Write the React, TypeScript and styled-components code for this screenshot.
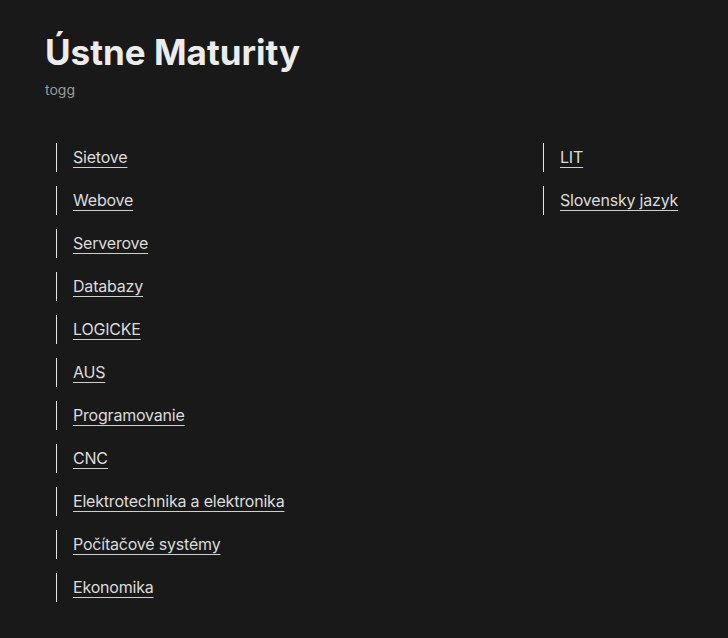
import React from "react";
import styled, { createGlobalStyle } from "styled-components";

const Global = createGlobalStyle`
  html, body { margin: 0; padding: 0; background: #191919; }
  body { font-family: Inter, "Noto Sans", sans-serif; color: #e6e6e6; }
`;

const Page = styled.div`
  padding: 30px 45px 30px 45px;
  min-height: 638px;
  box-sizing: border-box;
`;

const Title = styled.h1`
  margin: 0;
  font-size: 35px;
  font-weight: 700;
  color: #ececec;
  letter-spacing: 0;
  line-height: 44px;
`;

const Subtitle = styled.div`
  margin-top: 6px;
  font-size: 14px;
  color: #9b9b9b;
  line-height: 20px;
`;

const Columns = styled.div`
  display: grid;
  grid-template-columns: 487px 1fr;
  margin-top: 43px;
`;

const List = styled.div`
  display: flex;
  flex-direction: column;
  gap: 14px;
`;

const Item = styled.div`
  margin-left: 11px;
  border-left: 1.5px solid #e6e6e6;
  padding-left: 16px;
  height: 29px;
  display: flex;
  align-items: center;
  padding-bottom: 2px;
  box-sizing: border-box;
`;

const Link = styled.a`
  font-size: 16px;
  letter-spacing: -0.2px;
  color: #dcdcdc;
  text-decoration: underline;
  text-decoration-thickness: 1px;
  text-underline-offset: 4px;
  text-decoration-color: #cfcfcf;
  cursor: pointer;
`;

const left = [
  "Sietove",
  "Webove",
  "Serverove",
  "Databazy",
  "LOGICKE",
  "AUS",
  "Programovanie",
  "CNC",
  "Elektrotechnika a elektronika",
  "Počítačové systémy",
  "Ekonomika",
];
const right = ["LIT", "Slovensky jazyk"];

export default function App() {
  return (
    <>
      <Global />
      <Page>
        <Title>Ústne Maturity</Title>
        <Subtitle>togg</Subtitle>
        <Columns>
          <List>
            {left.map((t) => (
              <Item key={t}>
                <Link>{t}</Link>
              </Item>
            ))}
          </List>
          <List>
            {right.map((t) => (
              <Item key={t}>
                <Link>{t}</Link>
              </Item>
            ))}
          </List>
        </Columns>
      </Page>
    </>
  );
}
